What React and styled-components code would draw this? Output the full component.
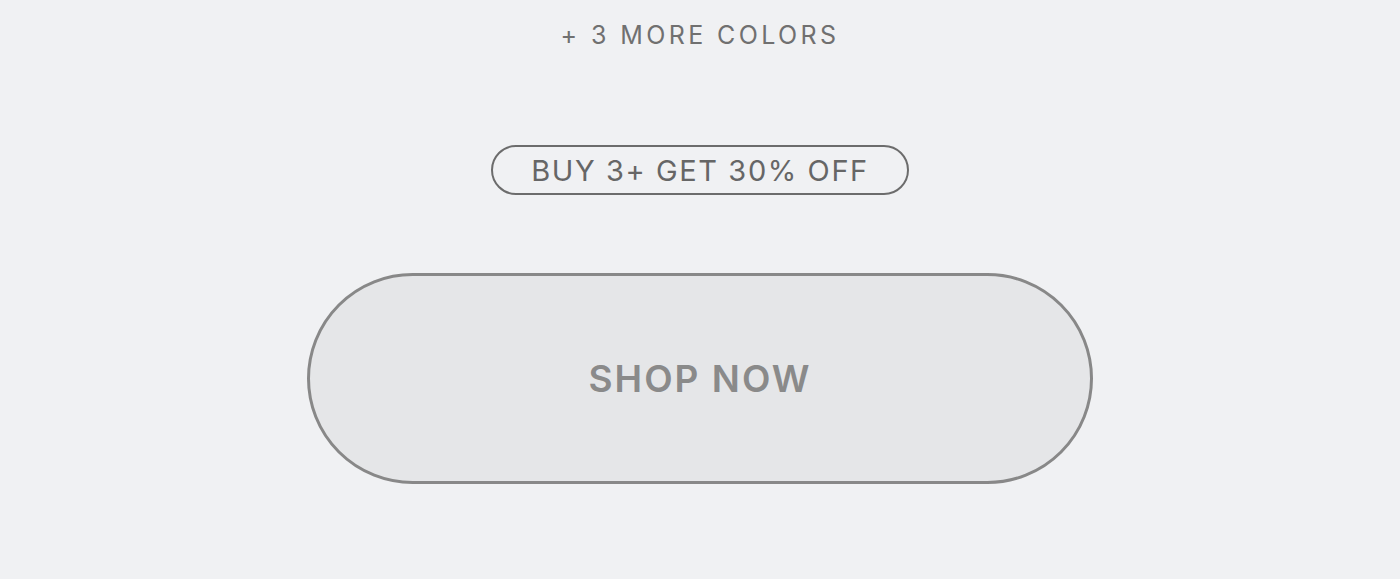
import styled, { createGlobalStyle } from 'styled-components'

const GlobalStyle = createGlobalStyle`
  html, body {
    margin: 0;
    padding: 0;
    background: #f0f1f3;
  }
  body {
    font-family: Inter, "Liberation Sans", sans-serif;
  }
`

const Page = styled.main`
  min-height: 579px;
  display: flex;
  flex-direction: column;
  align-items: center;
  padding-top: 20px;
  box-sizing: border-box;
`

const MoreColors = styled.p`
  margin: 0;
  font-size: 25px;
  line-height: 30px;
  letter-spacing: 3.4px;
  color: #707070;
`

const OfferBadge = styled.div`
  margin-top: 95px;
  height: 50px;
  box-sizing: border-box;
  display: inline-flex;
  align-items: center;
  padding: 0 38px;
  border: 2px solid #6c6c6c;
  border-radius: 25px;
  font-size: 29px;
  letter-spacing: 1.6px;
  color: #666;
`

const ShopButton = styled.button`
  margin-top: 78px;
  width: 786px;
  height: 211px;
  box-sizing: border-box;
  border: 3px solid #888;
  border-radius: 106px;
  background: #e5e6e8;
  font-family: inherit;
  font-size: 37px;
  font-weight: 600;
  letter-spacing: 2px;
  color: #8a8a8a;
  cursor: pointer;
`

export default function App() {
  return (
    <>
      <GlobalStyle />
      <Page>
        <MoreColors>+ 3 MORE COLORS</MoreColors>
        <OfferBadge>BUY 3+ GET 30% OFF</OfferBadge>
        <ShopButton>SHOP NOW</ShopButton>
      </Page>
    </>
  )
}
